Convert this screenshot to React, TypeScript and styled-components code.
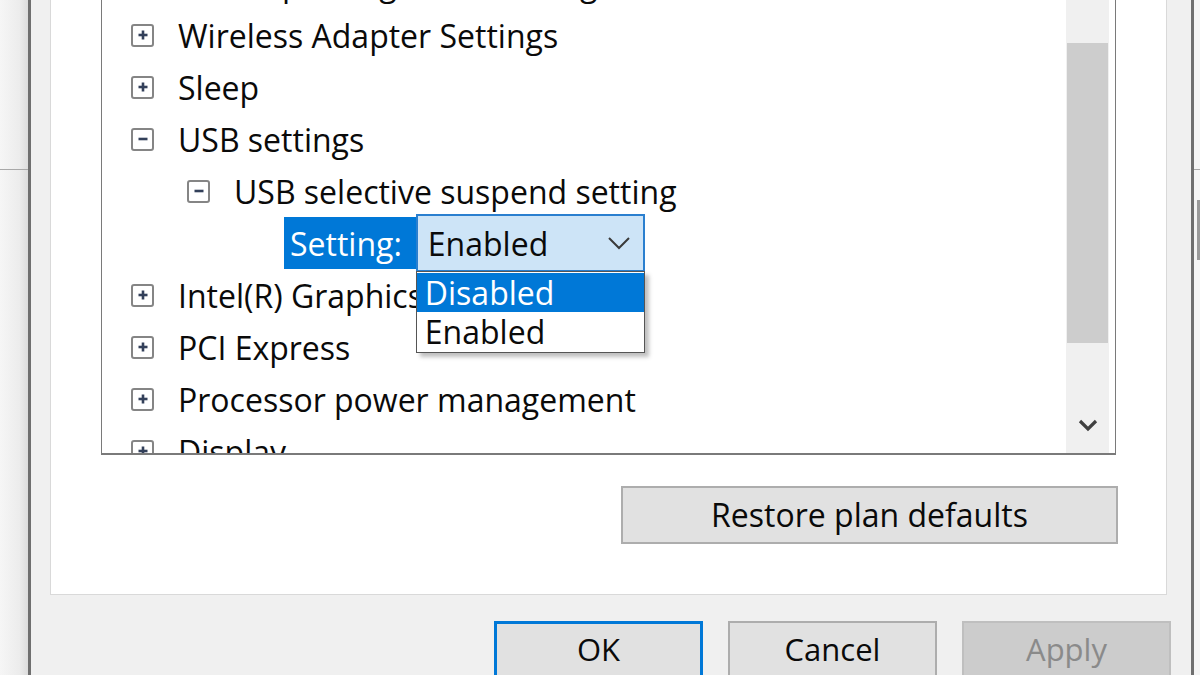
import styled, { createGlobalStyle } from "styled-components";

const GlobalStyle = createGlobalStyle`
  html, body {
    margin: 0;
    padding: 0;
    background: #f0f0f0;
  }
  #root {
    width: 1200px;
    height: 675px;
    overflow: hidden;
  }
`;

type Expand = "plus" | "minus" | "none";

type TreeItem = {
  label: string;
  level: number;
  expand: Expand;
  isSetting?: boolean;
};

const items: TreeItem[] = [
  { label: "Desktop background settings", level: 0, expand: "plus" },
  { label: "Wireless Adapter Settings", level: 0, expand: "plus" },
  { label: "Sleep", level: 0, expand: "plus" },
  { label: "USB settings", level: 0, expand: "minus" },
  { label: "USB selective suspend setting", level: 1, expand: "minus" },
  { label: "Setting:", level: 2, expand: "none", isSetting: true },
  { label: "Intel(R) Graphics Settings", level: 0, expand: "plus" },
  { label: "PCI Express", level: 0, expand: "plus" },
  { label: "Processor power management", level: 0, expand: "plus" },
  { label: "Display", level: 0, expand: "plus" },
  { label: "Multimedia settings", level: 0, expand: "plus" },
];

const options = ["Disabled", "Enabled"];

function Expander({ kind }: { kind: Expand }) {
  if (kind === "none") return <ExpanderSpacer />;
  return (
    <ExpanderBox>
      <svg width="12" height="12" viewBox="0 0 12 12">
        <path d="M1.5 6h9" stroke="#33405a" strokeWidth="2.6" />
        {kind === "plus" && <path d="M6 1.5v9" stroke="#33405a" strokeWidth="2.6" />}
      </svg>
    </ExpanderBox>
  );
}

function SettingCombo() {
  return (
    <Combo>
      <span>Enabled</span>
      <svg width="24" height="14" viewBox="0 0 24 14">
        <path d="M2 2l10 10L22 2" fill="none" stroke="#3a3a3a" strokeWidth="2" />
      </svg>
      <DropList>
        {options.map((o) => (
          <DropOption key={o} selected={o === "Disabled"}>
            {o}
          </DropOption>
        ))}
      </DropList>
    </Combo>
  );
}

export default function App() {
  return (
    <>
      <GlobalStyle />
      <Screen>
        <LeftBackdrop>
          <BackdropEdge />
        </LeftBackdrop>
        <DialogFrame>
          <Panel>
            <ListBox>
              <TreeViewport>
                <Tree>
                  {items.map((it) => (
                    <TreeRow key={it.label} level={it.level}>
                      <Expander kind={it.expand} />
                      {it.isSetting ? (
                        <>
                          <SettingLabel>{it.label}</SettingLabel>
                          <SettingCombo />
                        </>
                      ) : (
                        <RowLabel>{it.label}</RowLabel>
                      )}
                    </TreeRow>
                  ))}
                </Tree>
              </TreeViewport>
              <ScrollBar>
                <ScrollThumb />
                <ScrollDown>
                  <svg width="22" height="14" viewBox="0 0 22 14">
                    <path d="M3 3l8 8 8-8" fill="none" stroke="#404040" strokeWidth="3.2" />
                  </svg>
                </ScrollDown>
              </ScrollBar>
            </ListBox>
            <RestoreButton>Restore plan defaults</RestoreButton>
          </Panel>
          <ButtonRow>
            <DialogButton variant="default">OK</DialogButton>
            <DialogButton variant="normal">Cancel</DialogButton>
            <DialogButton variant="disabled">Apply</DialogButton>
          </ButtonRow>
        </DialogFrame>
        <RightBackdrop>
          <BackdropEdge />
          <BackdropTab />
        </RightBackdrop>
      </Screen>
    </>
  );
}

const Screen = styled.div`
  display: flex;
  width: 1200px;
  height: 675px;
  font-family: "Open Sans", "Noto Sans", sans-serif;
  color: #0a0a0a;
`;

const LeftBackdrop = styled.div`
  width: 28px;
  flex-shrink: 0;
  background: linear-gradient(to right, #f6f6f6, #ececec 70%, #dcdcdc);
`;

const RightBackdrop = styled.div`
  flex: 1;
  position: relative;
  background: #f4f4f4;
`;

const BackdropEdge = styled.div`
  height: 169px;
  border-bottom: 1px solid #a8a8a8;
`;

const BackdropTab = styled.div`
  position: absolute;
  top: 200px;
  right: 0;
  width: 3px;
  height: 60px;
  background: #9a9a9a;
`;

const DialogFrame = styled.div`
  width: 1166px;
  flex-shrink: 0;
  display: flex;
  flex-direction: column;
  border-left: 3px solid #6f6f6f;
  border-right: 3px solid #6f6f6f;
  background: #f0f0f0;
  padding: 0 24px 0 19px;
  box-sizing: border-box;
`;

const Panel = styled.div`
  display: flex;
  flex-direction: column;
  align-items: flex-end;
  background: #fff;
  border: 1px solid #d9d9d9;
  border-top: none;
  padding: 0 50px 50px 50px;
`;

const ListBox = styled.div`
  display: flex;
  align-self: stretch;
  height: 455px;
  border: 1px solid #7a7a7a;
  border-top: none;
  border-bottom-width: 2px;
  box-sizing: border-box;
  overflow: hidden;
`;

const TreeViewport = styled.div`
  flex: 1;
  overflow: hidden;
`;

const Tree = styled.div`
  margin-top: -43px;
  display: flex;
  flex-direction: column;
`;

const TreeRow = styled.div<{ level: number }>`
  display: flex;
  align-items: center;
  height: 52px;
  flex-shrink: 0;
  padding-left: ${({ level }) => 29 + level * 56}px;
  gap: 18px;
  font-size: 32px;
  white-space: nowrap;
`;

const ExpanderBox = styled.span`
  display: flex;
  align-items: center;
  justify-content: center;
  width: 23px;
  height: 23px;
  box-sizing: border-box;
  border: 2px solid #858585;
  border-radius: 3px;
  flex-shrink: 0;
`;

const ExpanderSpacer = styled.span`
  width: 23px;
  flex-shrink: 0;
`;

const RowLabel = styled.span`
  padding: 0 6px;
`;

const SettingLabel = styled.span`
  display: flex;
  align-items: center;
  height: 52px;
  padding: 0 14px 0 6px;
  background: #0078d7;
  color: #fff;
`;

const Combo = styled.div`
  position: relative;
  display: flex;
  align-items: center;
  justify-content: space-between;
  width: 229px;
  height: 58px;
  margin-left: -18px;
  padding: 0 12px 0 10px;
  box-sizing: border-box;
  border: 2px solid #2a7fcf;
  background: #cde4f7;
`;

const DropList = styled.div`
  position: absolute;
  top: calc(100% + 1px);
  left: -2px;
  width: 229px;
  box-sizing: border-box;
  border: 1px solid #555;
  background: #fff;
  padding: 1px 0;
  box-shadow: 4px 4px 4px rgba(0, 0, 0, 0.25);
  z-index: 2;
`;

const DropOption = styled.div<{ selected: boolean }>`
  height: 39px;
  display: flex;
  align-items: center;
  padding-left: 8px;
  background: ${({ selected }) => (selected ? "#0078d7" : "#fff")};
  color: ${({ selected }) => (selected ? "#fff" : "#0a0a0a")};
`;

const ScrollBar = styled.div`
  width: 43px;
  margin-right: 6px;
  flex-shrink: 0;
  display: flex;
  flex-direction: column;
  background: #f0f0f0;
  padding-top: 43px;
  box-sizing: border-box;
`;

const ScrollThumb = styled.div`
  height: 300px;
  margin: 0 1px;
  background: #cdcdcd;
`;

const ScrollDown = styled.div`
  margin-top: auto;
  height: 50px;
  display: flex;
  align-items: center;
  justify-content: center;
  padding-bottom: 6px;
  box-sizing: border-box;
`;

const RestoreButton = styled.button`
  margin-top: 31px;
  margin-right: -2px;
  width: 497px;
  height: 58px;
  background: #e1e1e1;
  border: 2px solid #adadad;
  font-family: inherit;
  font-size: 32px;
  color: #0a0a0a;
  padding: 0 0 2px 0;
`;

const ButtonRow = styled.div`
  display: flex;
  justify-content: flex-end;
  gap: 25px;
  margin-top: 26px;
  margin-right: -4px;
`;

const buttonColors = {
  default: { bg: "#e1e1e1", border: "#0078d7", color: "#0a0a0a" },
  normal: { bg: "#e1e1e1", border: "#adadad", color: "#0a0a0a" },
  disabled: { bg: "#cccccc", border: "#bfbfbf", color: "#8a8a8a" },
};

const DialogButton = styled.button<{ variant: keyof typeof buttonColors }>`
  width: 209px;
  height: 62px;
  flex-shrink: 0;
  background: ${({ variant }) => buttonColors[variant].bg};
  border: ${({ variant }) => (variant === "default" ? 3 : 2)}px solid
    ${({ variant }) => buttonColors[variant].border};
  color: ${({ variant }) => buttonColors[variant].color};
  font-family: inherit;
  font-size: 31px;
  padding: 0 0 6px 0;
`;
